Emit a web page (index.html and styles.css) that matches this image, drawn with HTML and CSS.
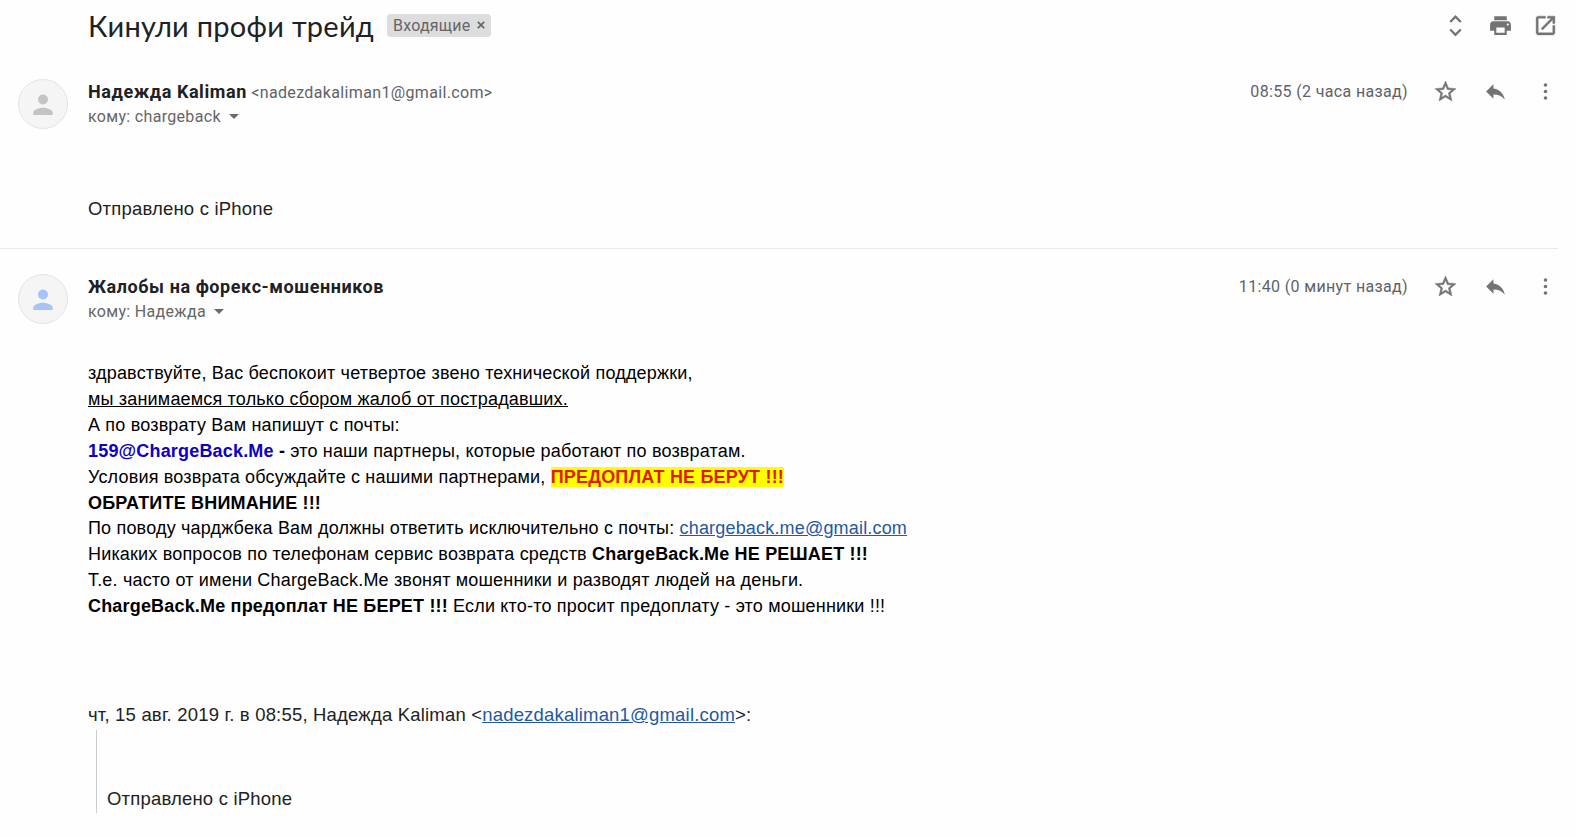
FILE: index.html
```html
<!DOCTYPE html>
<html lang="ru">
<head>
    <meta charset="UTF-8">
    <meta name="viewport" content="width=device-width, initial-scale=1.0">
    <title>Кинули профи трейд</title>
    <link rel="stylesheet" href="styles.css">
</head>
<body>
    <!-- иконки, общие для всех писем -->
    <svg width="0" height="0" class="sprite">
        <symbol id="star" viewBox="0 0 24 24"><path stroke="#737373" stroke-width=".5" d="M22 9.24l-7.19-.62L12 2 9.19 8.63 2 9.24l5.46 4.73L5.82 21 12 17.27 18.18 21l-1.63-7.03L22 9.24zM12 15.4l-3.76 2.27 1-4.28-3.32-2.88 4.38-.38L12 6.1l1.71 4.04 4.38.38-3.32 2.88 1 4.28L12 15.4z"/></symbol>
        <symbol id="reply" viewBox="0 0 24 24"><path d="M10 9V5l-7 7 7 7v-4.1c5 0 8.5 1.6 11 5.1-1-5-4-10-11-11z"/></symbol>
        <symbol id="more" viewBox="0 0 24 24"><circle cx="12" cy="5.8" r="1.75"/><circle cx="12" cy="12" r="1.75"/><circle cx="12" cy="18.200" r="1.75"/></symbol>
        <symbol id="person" viewBox="0 0 20 22"><circle cx="10" cy="5.5" r="5"/><path d="M.3 21v-2.3c0-3.3 6.4-5 9.7-5s9.700 1.700 9.700 5V21z"/></symbol>
    </svg>

    <div class="mail">
        <!-- тема письма -->
        <header class="subject">
            <h1>Кинули профи трейд</h1>
            <span class="label">Входящие <svg class="label-close" viewBox="0 0 8 8"><path d="M.8.8l6.4 6.4M7.2.8L.8 7.2"/></svg></span>
            <div class="tools">
                <svg class="icon expand" viewBox="0 0 25 25"><path d="M7.2 9l5.3-5.3L17.8 9M7.2 16.5l5.3 5.3 5.3-5.3"/></svg>
                <svg class="icon" viewBox="0 0 24 24"><path d="M19 8H5c-1.660 0-3 1.340-3 3v6h4v4h12v-4h4v-6c0-1.660-1.340-3-3-3zm-3 11H8v-5h8v5zm3-7c-.55 0-1-.45-1-1s.45-1 1-1 1 .45 1 1-.45 1-1 1zm-1-9H6v4h12V3z"/></svg>
                <svg class="icon bold" viewBox="0 0 24 24"><path d="M19 19H5V5h7V3H5c-1.110 0-2 .9-2 2v14c0 1.100.89 2 2 2h14c1.100 0 2-.9 2-2v-7h-2v7zM14 3v2h3.590l-9.830 9.830 1.410 1.410L19 6.410V10h2V3h-7z"/></svg>
            </div>
        </header>

        <!-- первое письмо -->
        <article class="message first">
            <div class="avatar"><svg><use href="#person"/></svg></div>
            <div class="content">
                <div class="head">
                    <div class="sender"><b>Надежда Kaliman</b> <span class="email">&lt;nadezdakaliman1@gmail.com&gt;</span></div>
                    <div class="date">08:55 (2 часа назад)</div>
                    <svg class="icon"><use href="#star"/></svg>
                    <svg class="icon"><use href="#reply"/></svg>
                    <svg class="icon"><use href="#more"/></svg>
                </div>
                <div class="to">кому: chargeback <i class="arrow"></i></div>
                <div class="text">Отправлено с iPhone</div>
            </div>
        </article>

        <!-- ответ -->
        <article class="message second">
            <div class="avatar blue"><svg><use href="#person"/></svg></div>
            <div class="content">
                <div class="head">
                    <div class="sender"><b>Жалобы на форекс-мошенников</b></div>
                    <div class="date">11:40 (0 минут назад)</div>
                    <svg class="icon"><use href="#star"/></svg>
                    <svg class="icon"><use href="#reply"/></svg>
                    <svg class="icon"><use href="#more"/></svg>
                </div>
                <div class="to">кому: Надежда <i class="arrow"></i></div>
                <div class="text reply">
                    <p>здравствуйте, Вас беспокоит четвертое звено технической поддержки,</p>
                    <p><u>мы занимаемся только сбором жалоб от пострадавших.</u></p>
                    <p>А по возврату Вам напишут с почты:</p>
                    <p><b class="address">159@ChargeBack.Me</b><b> -</b> это наши партнеры, которые работают по возвратам.</p>
                    <p>Условия возврата обсуждайте с нашими партнерами, <b class="warning">ПРЕДОПЛАТ НЕ БЕРУТ !!!</b></p>
                    <p><b>ОБРАТИТЕ ВНИМАНИЕ !!!</b></p>
                    <p>По поводу чарджбека Вам должны ответить исключительно с почты: <a href="#">chargeback.me@gmail.com</a></p>
                    <p>Никаких вопросов по телефонам сервис возврата средств <b>ChargeBack.Me НЕ РЕШАЕТ !!!</b></p>
                    <p>Т.е. часто от имени ChargeBack.Me звонят мошенники и разводят людей на деньги.</p>
                    <p><b>ChargeBack.Me предоплат НЕ БЕРЕТ !!!</b> Если кто-то просит предоплату - это мошенники !!!</p>
                </div>
                <div class="quote-info">чт, 15 авг. 2019 г. в 08:55, Надежда Kaliman &lt;<a href="#">nadezdakaliman1@gmail.com</a>&gt;:</div>
                <blockquote>Отправлено с iPhone</blockquote>
            </div>
        </article>
    </div>
</body>
</html>
```
FILE: styles.css
```css
body {
    margin: 0;
    background: #fefefe;
    color: #222;
    font-family: "Liberation Sans", Arial, sans-serif;
    font-size: 18px;
    overflow: hidden;
}
.sprite {
    display: block;
}
.mail {
    width: 1558px;
}
.subject {
    display: flex;
    align-items: center;
    height: 51px;
    padding: 0 0 1px 88px;
}
.subject h1 {
    margin: 0;
    font-family: Lato, "Open Sans", sans-serif;
    font-size: 29px;
    font-weight: 400;
    letter-spacing: 0.26px;
    line-height: 36px;
    white-space: nowrap;
    color: #202124;
}
.label {
    display: flex;
    align-items: center;
    box-sizing: border-box;
    width: 104px;
    height: 23px;
    margin-left: 13px;
    padding: 0 6px 1px;
    justify-content: space-between;
    border-radius: 4px;
    background: #ddd;
    color: #666;
    font-family: Roboto, sans-serif;
    font-size: 16px;
    letter-spacing: 0.2px;
    white-space: nowrap;
}
.label-close {
    width: 8px;
    height: 8px;
    fill: none;
    stroke: #666;
    stroke-width: 1.7;
}
.tools {
    display: flex;
    gap: 20px;
    margin-left: auto;
}
.icon {
    width: 25px;
    height: 25px;
    flex: none;
    fill: #737373;
}
.icon.expand {
    fill: none;
    stroke: #737373;
    stroke-width: 2.3;
}
.icon.bold {
    stroke: #737373;
    stroke-width: 0.4;
}
/* письма */
.message {
    display: flex;
    box-sizing: border-box;
    padding-left: 18px;
}
.message.first {
    height: 197px;
    padding-top: 27px;
    border-bottom: 1px solid #e9e9e9;
}
.message.second {
    padding-top: 25px;
}
.avatar {
    display: flex;
    align-items: center;
    justify-content: center;
    box-sizing: border-box;
    width: 50px;
    height: 50px;
    margin-right: 20px;
    flex: none;
    border: 1px solid #e4e4e4;
    border-radius: 50%;
    background: #f5f5f5;
    fill: #c4c4c4;
}
.avatar svg {
    width: 20px;
    height: 22px;
    margin-top: 1px;
}
.avatar.blue {
    fill: #a8c3f5;
}
.content {
    flex: 1;
}
.head {
    display: flex;
    align-items: center;
    gap: 25px;
    height: 25px;
    font-family: Roboto, sans-serif;
}
.sender {
    flex: 1;
    margin-bottom: 1px;
    white-space: nowrap;
}
.sender b {
    color: #202124;
    letter-spacing: 0.57px;
}
.email,
.date {
    color: #5f6368;
    font-size: 16px;
    letter-spacing: 0.35px;
}
.to {
    display: flex;
    align-items: center;
    height: 25px;
    color: #666;
    font-family: Roboto, sans-serif;
    font-size: 16px;
    letter-spacing: 0.32px;
}
.arrow {
    margin-left: 8px;
    border: 5px solid transparent;
    border-top-color: #6b6b6b;
    border-bottom: 0;
}
.text,
.quote-info,
blockquote {
    font-size: 18.5px;
    letter-spacing: 0.19px;
    line-height: 26px;
}
.text {
    margin-top: 67px;
}
.text.reply {
    margin-top: 37px;
    color: #000;
    font-size: 18px;
    letter-spacing: 0.18px;
    line-height: 25.9px;
}
.text p {
    margin: 0;
    white-space: nowrap;
}
.address {
    color: #0b00c4;
}
.warning {
    background: #ff0;
    color: #e01b00;
}
a {
    color: #2457a6;
}
.quote-info {
    margin-top: 82px;
}
blockquote {
    box-sizing: border-box;
    height: 83px;
    margin: 2px 0 0 8px;
    padding: 56px 0 0 10px;
    border-left: 1px solid #ccc;
}
```
